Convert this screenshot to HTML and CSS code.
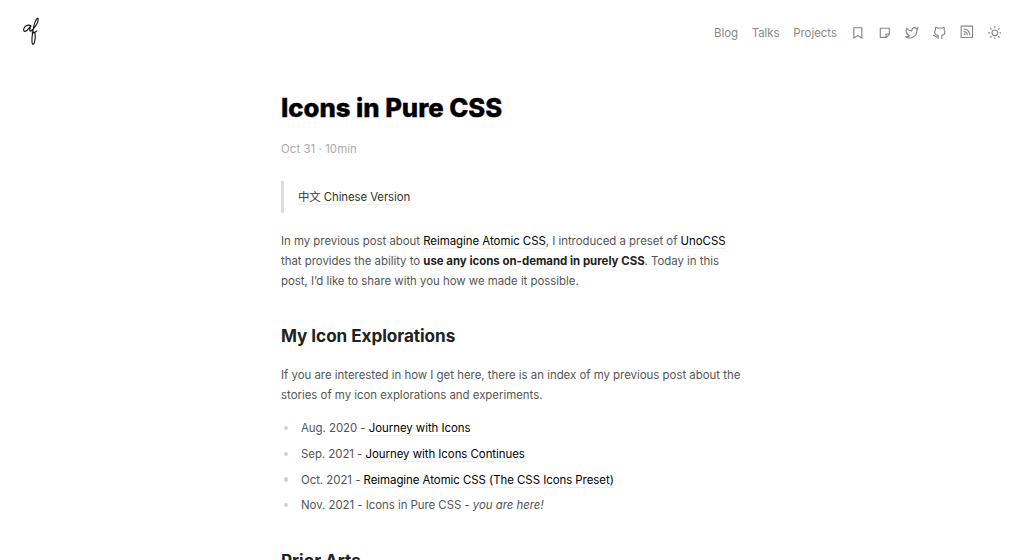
FILE: index.html
```html
<!DOCTYPE html>
<html lang="en">
<head>
<meta charset="utf-8">
<title>Icons in Pure CSS</title>
<link rel="stylesheet" href="styles.css">
</head>
<body>
<header class="header">
  <a class="logo" aria-label="Home"><svg viewBox="0 0 18 30"><path d="M8.500 9.800C6 8 2 10.500 1.600 13.500c-.2 2.600 2.300 2.400 4 .2L9 9.800C7.700 12.500 7.300 15 8.300 15.200 11 14.500 16.500 6.500 16.200 3 15.700.8 13 4.500 11.800 10 10.700 15.500 9.700 22 10 26c.3 3.600 2 2.800 2.700-.6.700-3.500.6-6.800.2-8.400-.4-1.500-1.900-1.300-2.700-.2 1.500.4 3.200-.4 4.600-1.900"/></svg></a>
  <nav class="nav">
    <a>Blog</a><a>Talks</a><a>Projects</a>
    <svg class="icon" viewBox="0 0 24 24"><path fill="currentColor" d="M5 2h14a1 1 0 0 1 1 1v19.143a.5.5 0 0 1-.766.424L12 18.03l-7.234 4.536A.5.5 0 0 1 4 22.143V3a1 1 0 0 1 1-1zm13 2H6v15.432l6-3.761 6 3.761V4z"/></svg>
    <svg class="icon" viewBox="0 0 24 24"><path fill="currentColor" d="M21 15l-6 5.996L4.002 21A.998.998 0 0 1 3 20.007V3.993C3 3.445 3.445 3 3.993 3h16.014c.548 0 .993.456.993 1.002V15zM19 5H5v14h8v-5a1 1 0 0 1 .883-.993L14 13l5-.001V5zm-.829 9.999L15 15v3.169l3.171-3.17z"/></svg>
    <svg class="icon" viewBox="0 0 24 24"><path class="line" d="M23 3a10.900 10.900 0 0 1-3.140 1.530 4.480 4.480 0 0 0-7.860 3v1A10.660 10.660 0 0 1 3 4s-4 9 5 13a11.640 11.640 0 0 1-7 2c9 5 20 0 20-11.500a4.500 4.500 0 0 0-.08-.83A7.720 7.720 0 0 0 23 3z"/></svg>
    <svg class="icon" viewBox="0 0 24 24"><path class="line" d="M9 22v-5.500c-2.800-.4-6-1.900-6-6 0-1.500.6-2.800 1.500-3.800-.4-1.500-.3-3.200.2-4.500 1.700.1 2.900.9 4 1.700a13 13 0 0 1 6.500 0c1.100-.8 2.300-1.600 4-1.700.5 1.300.6 3 .2 4.500.9 1 1.500 2.300 1.500 3.800 0 4.100-3 5.600-5.500 6V22M9 19.200c-3.600 1.100-5.200-2.200-8-2.700"/></svg>
    <svg class="icon rss" viewBox="0 0 24 24"><g class="line"><path d="M2 2h20v20H2zM7 7c5.500 0 10 4.500 10 10M7 11.500c3 0 5.500 2.500 5.500 5.500"/><circle cx="8" cy="16.300" r=".7"/></g></svg>
    <svg class="icon" viewBox="0 0 24 24"><g class="line"><circle cx="12" cy="12" r="5"/><path d="M12 1v2M12 21v2M1 12h2M21 12h2M4.200 4.200l1.400 1.400M18.400 18.400l1.400 1.400M4.200 19.800l1.400-1.400M18.400 5.600l1.400-1.400"/></g></svg>
  </nav>
</header>
<main class="article">
  <h1 class="title">Icons in Pure CSS</h1>
  <p class="date">Oct 31 · 10min</p>
  <blockquote class="quote"><a class="link soft">中文 Chinese Version</a></blockquote>
  <p class="text">In my previous post about <a class="link">Reimagine Atomic CSS</a>, I introduced a preset of <a class="link">UnoCSS</a><br>that provides the ability to <strong>use any icons on-demand in purely CSS</strong>. Today in this<br>post, I’d like to share with you how we made it possible.</p>
  <h2 class="heading">My Icon Explorations</h2>
  <p class="text wide">If you are interested in how I get here, there is an index of my previous post about the<br>stories of my icon explorations and experiments.</p>
  <ul class="list">
    <li><span>Aug. 2020 - <a class="link">Journey with Icons</a></span></li>
    <li><span>Sep. 2021 - <a class="link">Journey with Icons Continues</a></span></li>
    <li><span>Oct. 2021 - <a class="link">Reimagine Atomic CSS (The CSS Icons Preset)</a></span></li>
    <li><span>Nov. 2021 - Icons in Pure CSS - <em>you are here!</em></span></li>
  </ul>
  <h2 class="heading">Prior Arts</h2>
</main>
</body>
</html>
```
FILE: styles.css
```css
* { box-sizing: border-box; }
html { height: 100%; overflow: hidden; }
body {
  margin: 0;
  height: 100%;
  overflow: hidden;
  background: #fff;
  color: #555;
  font: 11.43px/20px Inter, "Noto Sans CJK SC", sans-serif;
}
.header {
  display: flex;
  justify-content: space-between;
  align-items: flex-start;
  height: 92px;
  padding: 16px 22.800px 0 22px;
}
.logo svg {
  display: block;
  width: 18px;
  height: 30px;
  fill: none;
  stroke: #111;
  stroke-width: 1.1;
  stroke-linecap: round;
  stroke-linejoin: round;
}
.nav {
  display: flex;
  align-items: center;
  gap: 13.700px;
  height: 33px;
  color: #888;
}
.nav a { letter-spacing: -0.02px; }
.icon { width: 13.700px; height: 13.700px; flex: none; }
.rss { margin-bottom: 2px; }
.line {
  fill: none;
  stroke: currentColor;
  stroke-width: 2;
  stroke-linecap: round;
  stroke-linejoin: round;
}
.article { width: 464px; margin-left: 281px; white-space: nowrap; }
.title {
  margin: 0;
  padding-top: 1px;
  color: #000;
  font-size: 25.700px;
  line-height: 30px;
  letter-spacing: -0.03px;
  font-weight: 800;
  -webkit-text-stroke: 0.35px #000;
}
.date { margin: 16px 0 22px; color: #aaa; letter-spacing: 0.06px; }
.quote {
  margin: 0 0 18px;
  padding: 6px 0 6px 14px;
  height: 31.500px;
  border-left: 3px solid #ddd;
  letter-spacing: -0.1px;
}
.text { margin: 0; letter-spacing: -0.025px; }
.wide { letter-spacing: -0.012px; }
.link { color: #000; border-bottom: 1px solid #eee; }
.soft { color: #333; }
strong { color: #222; font-weight: 650; letter-spacing: 0; }
.heading {
  margin: 34.300px 0 16.800px;
  color: #222;
  font-size: 17.140px;
  line-height: 22.900px;
  letter-spacing: -0.05px;
  font-weight: 700;
}
.list { margin: 13.700px 0 0; padding: 0; list-style: none; letter-spacing: -0.035px; }
.list li {
  display: flex;
  align-items: center;
  margin-bottom: 5.700px;
  line-height: 20px;
}
.list li::before {
  content: "";
  width: 4.300px;
  height: 4.300px;
  margin: 0 13px 0 2.700px;
  border-radius: 50%;
  background: #d4d4d4;
}
```
